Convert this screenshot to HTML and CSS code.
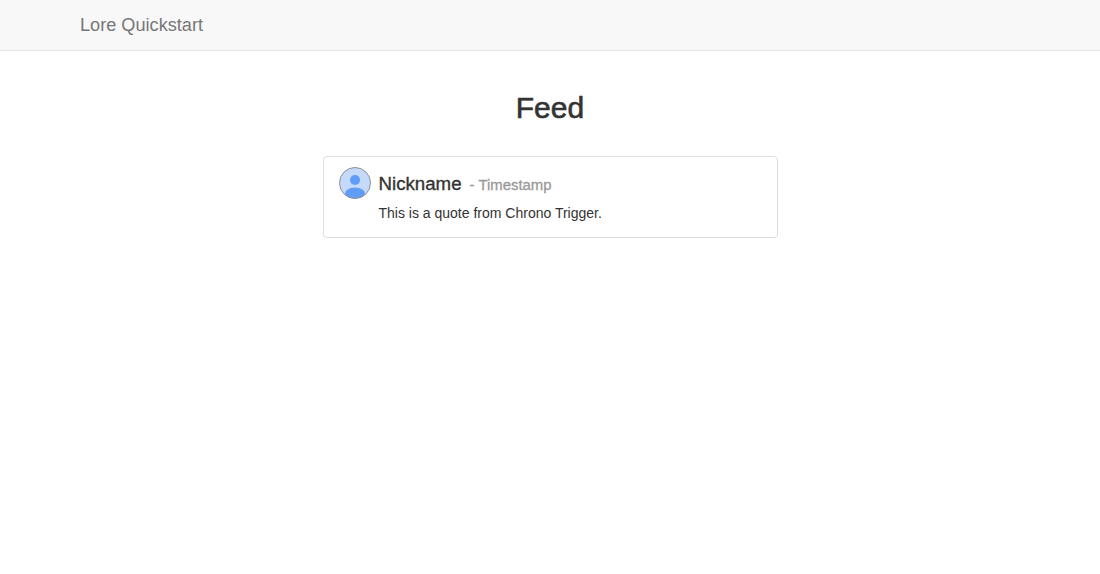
FILE: index.html
```
<!DOCTYPE html>
<html lang="en">
<head>
<meta charset="utf-8">
<title>Lore Quickstart</title>
<link rel="stylesheet" href="styles.css">
</head>
<body>
<nav class="navbar"><a class="brand" href="#">Lore Quickstart</a></nav>
<main class="page">
  <h1 class="title">Feed</h1>
  <ul class="feed">
    <li class="tweet">
      <svg class="avatar" viewBox="0 0 32 32" width="32" height="32" aria-hidden="true">
        <defs><clipPath id="c"><circle cx="16" cy="16" r="15.5"/></clipPath></defs>
        <circle cx="16" cy="16" r="15.5" fill="#c5d9fb"/>
        <g clip-path="url(#c)">
          <circle cx="16" cy="13" r="5" fill="#5f9df7"/>
          <ellipse cx="16" cy="26.5" rx="10" ry="6" fill="#5f9df7"/>
        </g>
        <circle cx="16" cy="16" r="15.5" fill="none" stroke="#8f8f96" stroke-width="1"/>
      </svg>
      <div class="body">
        <h4 class="head"><span class="nick">Nickname</span> <small class="stamp">- Timestamp</small></h4>
        <p class="quote">This is a quote from Chrono Trigger.</p>
      </div>
    </li>
  </ul>
</main>
</body>
</html>
```
FILE: styles.css
```
* { box-sizing: border-box; }
html, body { margin: 0; height: 100%; }
body {
  background: #fff;
  color: #333;
  font-family: "Liberation Sans", Arial, sans-serif;
  font-size: 14px;
  line-height: 20px;
}
.navbar {
  height: 51px;
  background: #f8f8f8;
  border-bottom: 1px solid #e7e7e7;
  padding-left: 80px;
  display: flex;
  align-items: center;
}
.brand {
  color: #777;
  font-size: 18.15px;
  text-decoration: none;
  line-height: 50px;
}
.page { display: flex; flex-direction: column; align-items: center; }
.title {
  margin: 38px 0 30px;
  font-size: 30px;
  line-height: 37px;
  font-weight: 400;
  -webkit-text-stroke: 0.6px #333;
  color: #333;
}
.feed { list-style: none; margin: 0; padding: 0; width: 455px; }
.tweet {
  display: flex;
  gap: 8px;
  height: 82px;
  padding: 10px 15px;
  background: #fff;
  border: 1px solid #ddd;
  border-radius: 4px;
}
.avatar { flex: none; display: block; }
.body { flex: 1; min-width: 0; }
.head {
  margin: 6px 0 0;
  font-size: 18.7px;
  line-height: 22px;
  font-weight: 400;
  color: #333;
  display: flex;
  align-items: baseline;
  gap: 8px;
}
.nick { -webkit-text-stroke: 0.35px #333; }
.stamp { font-size: 14.9px; font-weight: 400; color: #999; -webkit-text-stroke: 0.3px #999; }
.quote { margin: 7px 0 0; color: #333; font-size: 14px; line-height: 20px; }
```
